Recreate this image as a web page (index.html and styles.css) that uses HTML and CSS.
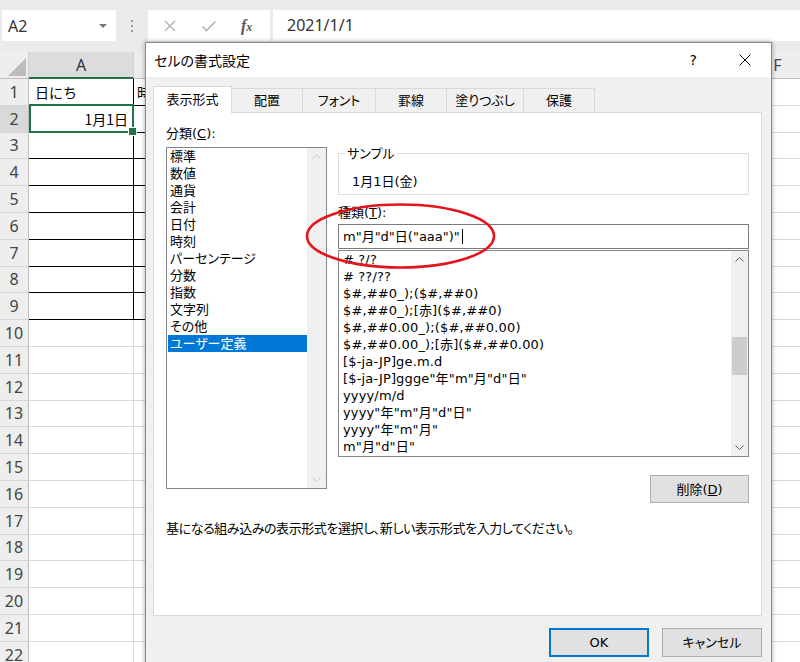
FILE: index.html
```html
<!DOCTYPE html>
<html lang="ja">
<head>
<meta charset="utf-8">
<title>セルの書式設定</title>
<link rel="stylesheet" href="styles.css">
</head>
<body>
<div class="app">
  <div class="fbar">
    <div class="namebox"><span>A2</span><span class="nb-arrow"></span></div>
    <div class="grip"><i></i><i></i><i></i></div>
    <div class="fxbox">
      <svg class="ico" width="14" height="14" viewBox="0 0 14 14"><path d="M2 2L12 12M12 2L2 12" stroke="#b3b3b3" stroke-width="1.4" fill="none"/></svg>
      <svg class="ico" width="16" height="14" viewBox="0 0 16 14"><path d="M1.5 7.5L5.5 11.5L14.5 2.5" stroke="#b3b3b3" stroke-width="1.6" fill="none"/></svg>
      <span class="fx">f<span class="fx-x">x</span></span>
    </div>
    <div class="finput">2021/1/1</div>
  </div>

  <div class="sheet">
    <div class="hd corner"><svg width="18" height="18" viewBox="0 0 18 18"><path d="M18 0L18 18L0 18Z" fill="#bdbdbd"/></svg></div>
    <div class="hd sel">A</div>
    <div class="hd">B</div>
    <div class="hd">F</div>

    <div class="rh">1</div><div class="cell ca bk pad">日にち</div><div class="cell cb bk">時刻</div><div class="cell cf"></div>
    <div class="rh sel">2</div><div class="cell ca bk active">1月1日</div><div class="cell cb bk"></div><div class="cell cf"></div>
    <div class="rh">3</div><div class="cell ca bk"></div><div class="cell cb bk"></div><div class="cell cf"></div>
    <div class="rh">4</div><div class="cell ca bk"></div><div class="cell cb bk"></div><div class="cell cf"></div>
    <div class="rh">5</div><div class="cell ca bk"></div><div class="cell cb bk"></div><div class="cell cf"></div>
    <div class="rh">6</div><div class="cell ca bk"></div><div class="cell cb bk"></div><div class="cell cf"></div>
    <div class="rh">7</div><div class="cell ca bk"></div><div class="cell cb bk"></div><div class="cell cf"></div>
    <div class="rh">8</div><div class="cell ca bk"></div><div class="cell cb bk"></div><div class="cell cf"></div>
    <div class="rh">9</div><div class="cell ca bk"></div><div class="cell cb bk"></div><div class="cell cf"></div>
    <div class="rh">10</div><div class="cell ca"></div><div class="cell cb"></div><div class="cell cf"></div>
    <div class="rh">11</div><div class="cell ca"></div><div class="cell cb"></div><div class="cell cf"></div>
    <div class="rh">12</div><div class="cell ca"></div><div class="cell cb"></div><div class="cell cf"></div>
    <div class="rh">13</div><div class="cell ca"></div><div class="cell cb"></div><div class="cell cf"></div>
    <div class="rh">14</div><div class="cell ca"></div><div class="cell cb"></div><div class="cell cf"></div>
    <div class="rh">15</div><div class="cell ca"></div><div class="cell cb"></div><div class="cell cf"></div>
    <div class="rh">16</div><div class="cell ca"></div><div class="cell cb"></div><div class="cell cf"></div>
    <div class="rh">17</div><div class="cell ca"></div><div class="cell cb"></div><div class="cell cf"></div>
    <div class="rh">18</div><div class="cell ca"></div><div class="cell cb"></div><div class="cell cf"></div>
    <div class="rh">19</div><div class="cell ca"></div><div class="cell cb"></div><div class="cell cf"></div>
    <div class="rh">20</div><div class="cell ca"></div><div class="cell cb"></div><div class="cell cf"></div>
    <div class="rh">21</div><div class="cell ca"></div><div class="cell cb"></div><div class="cell cf"></div>
    <div class="rh">22</div><div class="cell ca"></div><div class="cell cb"></div><div class="cell cf"></div>
  </div>

  <div class="dialog">
    <div class="titlebar">
      <span class="title">セルの書式設定</span>
      <span class="help">?</span>
      <svg class="close" width="12" height="12" viewBox="0 0 12 12"><path d="M0.5 0.5L11.5 11.5M11.5 0.5L0.5 11.5" stroke="#000" stroke-width="1" fill="none"/></svg>
    </div>
    <div class="dbody">
      <div class="tabs">
        <div class="tab active">表示形式</div>
        <div class="tab">配置</div>
        <div class="tab wide">フォント</div>
        <div class="tab">罫線</div>
        <div class="tab wider">塗りつぶし</div>
        <div class="tab">保護</div>
      </div>
      <div class="panel">
        <div class="cols">
          <div class="lcol">
            <div class="lbl cat-lbl">分類(<u>C</u>):</div>
            <div class="listbox cat">
              <ul class="items">
                <li>標準</li>
                <li>数値</li>
                <li>通貨</li>
                <li>会計</li>
                <li>日付</li>
                <li>時刻</li>
                <li>パーセンテージ</li>
                <li>分数</li>
                <li>指数</li>
                <li>文字列</li>
                <li>その他</li>
                <li class="sel">ユーザー定義</li>
              </ul>
              <div class="vscroll off">
                <div class="arrow"><svg width="9" height="5" viewBox="0 0 9 5"><path d="M0.5 4.5L4.5 0.5L8.5 4.5" stroke="#c4c4c4" fill="none"/></svg></div>
                <div class="track"></div>
                <div class="arrow"><svg width="9" height="5" viewBox="0 0 9 5"><path d="M0.5 0.5L4.5 4.5L8.5 0.5" stroke="#c4c4c4" fill="none"/></svg></div>
              </div>
            </div>
          </div>
          <div class="rcol">
            <fieldset class="sample">
              <legend>サンプル</legend>
              <div>1月1日(金)</div>
            </fieldset>
            <div class="lbl kind">種類(<u>T</u>):</div>
            <div class="input">m"月"d"日("aaa")"<span class="caret"></span></div>
            <div class="listbox fmt">
              <ul class="items">
                <li># ?/?</li>
                <li># ??/??</li>
                <li>$#,##0_);($#,##0)</li>
                <li>$#,##0_);[赤]($#,##0)</li>
                <li>$#,##0.00_);($#,##0.00)</li>
                <li>$#,##0.00_);[赤]($#,##0.00)</li>
                <li>[$-ja-JP]ge.m.d</li>
                <li>[$-ja-JP]ggge"年"m"月"d"日"</li>
                <li>yyyy/m/d</li>
                <li>yyyy"年"m"月"d"日"</li>
                <li>yyyy"年"m"月"</li>
                <li>m"月"d"日"</li>
              </ul>
              <div class="vscroll">
                <div class="arrow"><svg width="9" height="5" viewBox="0 0 9 5"><path d="M0.5 4.5L4.5 0.5L8.5 4.5" stroke="#606060" fill="none"/></svg></div>
                <div class="track"><div class="thumb"></div></div>
                <div class="arrow"><svg width="9" height="5" viewBox="0 0 9 5"><path d="M0.5 0.5L4.5 4.5L8.5 0.5" stroke="#606060" fill="none"/></svg></div>
              </div>
            </div>
            <div class="btnrow"><button class="btn del">削除(<u>D</u>)</button></div>
          </div>
        </div>
        <p class="desc">基になる組み込みの表示形式を選択し、新しい表示形式を入力してください。</p>
      </div>
      <div class="footer">
        <button class="btn ok">OK</button>
        <button class="btn">キャンセル</button>
      </div>
    </div>
  </div>

  <svg class="mark" width="204" height="76" viewBox="0 0 204 76"><ellipse cx="101.5" cy="37" rx="93.5" ry="31.5" fill="none" stroke="#e3141c" stroke-width="2.6"/></svg>
</div>
</body>
</html>
```

FILE: styles.css
```css
* { box-sizing: border-box; margin: 0; padding: 0; }
body { margin: 0; width: 800px; height: 662px; overflow: hidden; background: #fff; font-family: "Noto Sans CJK JP", sans-serif; }
.app { position: relative; width: 800px; height: 662px; overflow: hidden; }

/* formula bar */
.fbar { height: 52px; background: #ebebeb; display: flex; align-items: flex-start; padding-top: 10px; }
.namebox { margin-left: 2px; width: 114px; height: 31px; background: #fff; display: flex; align-items: center; justify-content: space-between; padding: 0 9px 0 6px; font: 16px "Noto Sans", sans-serif; color: #333; }
.nb-arrow { width: 0; height: 0; border-left: 4px solid transparent; border-right: 4px solid transparent; border-top: 4px solid #777; }
.grip { width: 32px; height: 31px; display: flex; flex-direction: column; align-items: center; justify-content: center; gap: 3px; }
.grip i { display: block; width: 2px; height: 2px; background: #9a9a9a; }
.fxbox { width: 122px; height: 31px; background: #fff; display: flex; align-items: center; padding-left: 15px; gap: 24px; }
.fx { font: italic bold 16px "Liberation Serif", serif; color: #555; }
.fx-x { font-size: 12px; }
.finput { margin-left: 3px; flex: 1; height: 31px; background: #fff; padding-left: 14px; font: 16px/31px "Noto Sans", sans-serif; color: #333; }

/* sheet */
.sheet { display: grid; grid-template-columns: 29px 105px 614px 60px; grid-template-rows: 27px repeat(22, 26.8px); }
.hd { background: #eeeeee; border-bottom: 1px solid #bdbdbd; border-right: 1px solid #d0d0d0; display: flex; align-items: center; justify-content: center; font: 16px "Noto Sans", sans-serif; color: #444; }
.hd.sel { background: #dcdcdc; border-bottom: 2px solid #217346; color: #333; }
.hd.corner { align-items: flex-end; justify-content: flex-end; padding: 0 2px 2px 0; }
.rh { background: #eeeeee; border-right: 1px solid #bdbdbd; border-bottom: 1px solid #d6d6d6; display: flex; align-items: center; justify-content: center; font: 16px "Noto Sans", sans-serif; color: #444; }
.rh.sel { background: #d9d9d9; }
.cell { border-right: 1px solid #dadada; border-bottom: 1px solid #dadada; display: flex; align-items: center; font-size: 14px; color: #000; padding: 0 3px; white-space: nowrap; overflow: hidden; }
.cell.bk { border-bottom-color: #000; }
.ca.bk { border-right-color: #000; }
.cell.pad { padding-left: 6px; }
.cell.active { position: relative; overflow: visible; justify-content: flex-end; padding-right: 5px; z-index: 2; }
.cell.active::after { content: ""; position: absolute; top: -2px; left: 0; right: -1px; bottom: -1px; border: 2px solid #217346; }
.cell.active::before { content: ""; position: absolute; right: -4px; bottom: -4px; width: 7px; height: 7px; background: #217346; border: 1px solid #fff; z-index: 1; }
.cf { border-right: none; }

/* dialog */
.dialog { position: absolute; left: 145px; top: 42px; width: 627px; height: 640px; background: #f0f0f0; border: 1px solid #8a8a8a; box-shadow: 0 0 5px rgba(0,0,0,.35); font: 13px/17px "DejaVu Sans", "Noto Sans CJK JP", sans-serif; font-feature-settings: "palt"; color: #000; }
.titlebar { height: 34px; background: #fff; display: flex; align-items: center; padding-left: 8px; }
.title { flex: 1; font-size: 14px; font-family: "Noto Sans CJK JP", sans-serif; }
.help { margin-right: 42px; font-size: 14px; }
.close { margin-right: 20px; }
.dbody { padding: 9px 9px 0 7px; }
.tabs { display: flex; align-items: flex-end; height: 26px; }
.tab { height: 24px; width: 72px; border: 1px solid #d9d9d9; border-bottom: none; margin-left: -1px; display: flex; align-items: center; justify-content: center; background: #f0f0f0; white-space: nowrap; }
.tab.wide { width: 74px; }
.tab.wider { width: 78px; }
.tab.active { width: 79px; height: 27px; margin-left: 0; background: #fff; position: relative; z-index: 1; margin-bottom: -1px; padding-bottom: 1px; }
.panel { height: 504px; background: #fff; border: 1px solid #d9d9d9; padding: 12px 12px 0; }
.cols { display: grid; grid-template-columns: 161px 411px; column-gap: 11px; align-items: start; }
.lbl { height: 17px; white-space: nowrap; }
.cat-lbl { margin-bottom: 5px; }
.listbox { display: flex; border: 1px solid #828790; background: #fff; }
.listbox.cat { height: 342px; }
.listbox.fmt { height: 207px; margin-top: 1px; }
.items { list-style: none; flex: 1; min-width: 0; overflow: hidden; }
.items li { height: 17px; white-space: nowrap; }
.cat .items { padding-left: 1px; }
.cat .items li { padding-left: 2px; }
.fmt .items li { padding-left: 4px; letter-spacing: 0.15px; }
.items li.sel { background: #0078d7; color: #fff; }
.vscroll { width: 19px; background: #f0f0f0; display: flex; flex-direction: column; }
.fmt .vscroll { width: 17px; }
.arrow { height: 17px; display: flex; align-items: center; justify-content: center; }
.track { flex: 1; }
.thumb { margin: 69px 1px 0; height: 38px; background: #cdcdcd; }
.sample { margin-top: 20px; border: 1px solid #dcdcdc; padding: 11px 12px 4px 13px; min-width: 0; }
.sample legend { padding: 0 2px; margin-left: -7px; }
.kind { margin-top: 9px; }
.input { margin-top: 3px; height: 25px; border: 1px solid #7a7a7a; padding-left: 4px; display: flex; align-items: center; white-space: pre; }
.caret { display: inline-block; width: 1px; height: 15px; background: #000; margin-left: 2px; }
.btnrow { display: flex; justify-content: flex-end; margin-top: 18px; }
.btn { height: 28px; width: 99px; background: #e1e1e1; border: 1px solid #adadad; font: inherit; color: #000; }
.desc { margin-top: 17px; white-space: nowrap; letter-spacing: -0.42px; }
.footer { display: flex; justify-content: flex-end; gap: 13px; margin-top: 12px; }
.footer .btn { width: 100px; height: 29px; }
.btn.ok { border: 1px solid #0078d7; box-shadow: inset 0 0 0 1px #0078d7; }

.mark { position: absolute; left: 299px; top: 199px; }
```
